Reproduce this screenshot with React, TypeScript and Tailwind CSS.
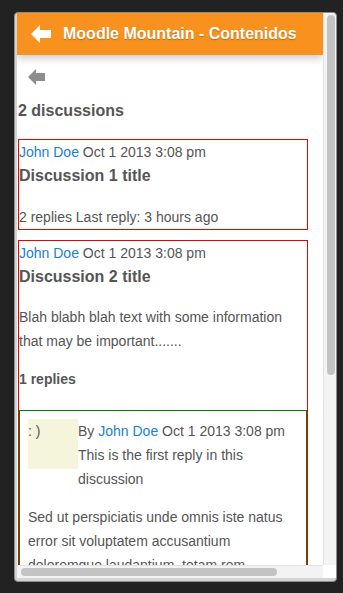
import React from "react";

type Meta = { by?: boolean; author: string; date: string };

function MetaLine({ by, author, date }: Meta) {
  return (
    <div className="leading-[24px]">
      {by && "By "}
      <a className="text-[#1a7fd0]">{author}</a> {date}
    </div>
  );
}

function HeaderArrow() {
  return (
    <svg width="20" height="20" viewBox="0 0 20 20" className="shrink-0">
      <polygon points="0,10 9,1 9,6 20,6 20,14 9,14 9,19" fill="#fff" />
    </svg>
  );
}

function BackArrow() {
  return (
    <svg width="17" height="16" viewBox="0 0 17 16">
      <polygon points="0,8 8,0 8,4 17,4 17,12 8,12 8,16" fill="#8c8c8c" />
    </svg>
  );
}

export default function App() {
  return (
    <div className="w-[343px] h-[593px] overflow-hidden bg-[#222222] pt-[12px] pl-[14px] font-['Liberation_Sans',Arial,sans-serif] text-[14px] text-[#555555]">
      <div className="w-[323px] h-[570px] rounded-[4px] border border-[#8e8e8e] bg-[#d4d4d4] pl-[2px] pb-[3px]">
        <div className="grid grid-cols-[306px_13px] grid-rows-[552px_13px]">
          {/* page */}
          <div className="relative overflow-hidden bg-white">
            <header className="relative z-10 flex h-[42px] items-center gap-[12px] bg-[#f8911e] pl-[14px] shadow-[0_3px_8px_rgba(0,0,0,0.22)]">
              <HeaderArrow />
              <h1 className="text-[16px] font-bold text-white [text-shadow:0_1px_1px_rgba(0,0,0,0.25)]">
                Moodle Mountain - Contenidos
              </h1>
            </header>

            <div className="w-[360px] pl-[1px]">
              <div className="ml-[10px] mt-[14px] h-[16px]">
                <BackArrow />
              </div>
              <h2 className="mt-[14px] text-[16px] font-bold leading-[24px]">2 discussions</h2>

              <div className="mt-[16px] w-[290px] border border-[#ee0000]">
                <MetaLine author="John Doe" date="Oct 1 2013 3:08 pm" />
                <h3 className="text-[16px] font-bold leading-[24px]">Discussion 1 title</h3>
                <p className="mt-[17px] leading-[24px]">2 replies Last reply: 3 hours ago</p>
              </div>

              <div className="mt-[10px] w-[290px] border border-[#ee0000] border-b-0">
                <MetaLine author="John Doe" date="Oct 1 2013 3:08 pm" />
                <h3 className="text-[16px] font-bold leading-[24px]">Discussion 2 title</h3>
                <p className="mt-[16px] leading-[24px]">
                  Blah blabh blah text with some information that may be important.......
                </p>
                <h4 className="mt-[14px] text-[14px] font-bold leading-[24px]">1 replies</h4>

                <div className="mt-[19px] border border-[#008000] p-[8px]">
                  <div className="flex">
                    <div className="h-[50px] w-[50px] shrink-0 bg-[#f5f5dc] leading-[24px]">: )</div>
                    <div>
                      <MetaLine by author="John Doe" date="Oct 1 2013 3:08 pm" />
                      <p className="leading-[24px]">This is the first reply in this discussion</p>
                    </div>
                  </div>
                  <p className="mt-[14px] leading-[24px]">
                    Sed ut perspiciatis unde omnis iste natus error sit voluptatem accusantium
                    doloremque laudantium, totam rem aperiam, eaque ipsa quae ab illo inventore
                    veritatis et quasi architecto beatae vitae dicta sunt explicabo.
                  </p>
                </div>
              </div>
            </div>
          </div>

          {/* vertical scrollbar */}
          <div className="rounded-tr-[4px] border-l border-[#e2e2e2] bg-[#f3f3f3] pl-[3px] pt-[2px]">
            <div className="h-[360px] w-[8px] rounded-full bg-[#c3c3c3]" />
          </div>

          {/* horizontal scrollbar */}
          <div className="border-t border-[#e2e2e2] bg-[#f3f3f3] pl-[4px] pt-[2px]">
            <div className="h-[8px] w-[256px] rounded-full bg-[#c3c3c3]" />
          </div>
          <div className="bg-white" />
        </div>
      </div>
    </div>
  );
}
